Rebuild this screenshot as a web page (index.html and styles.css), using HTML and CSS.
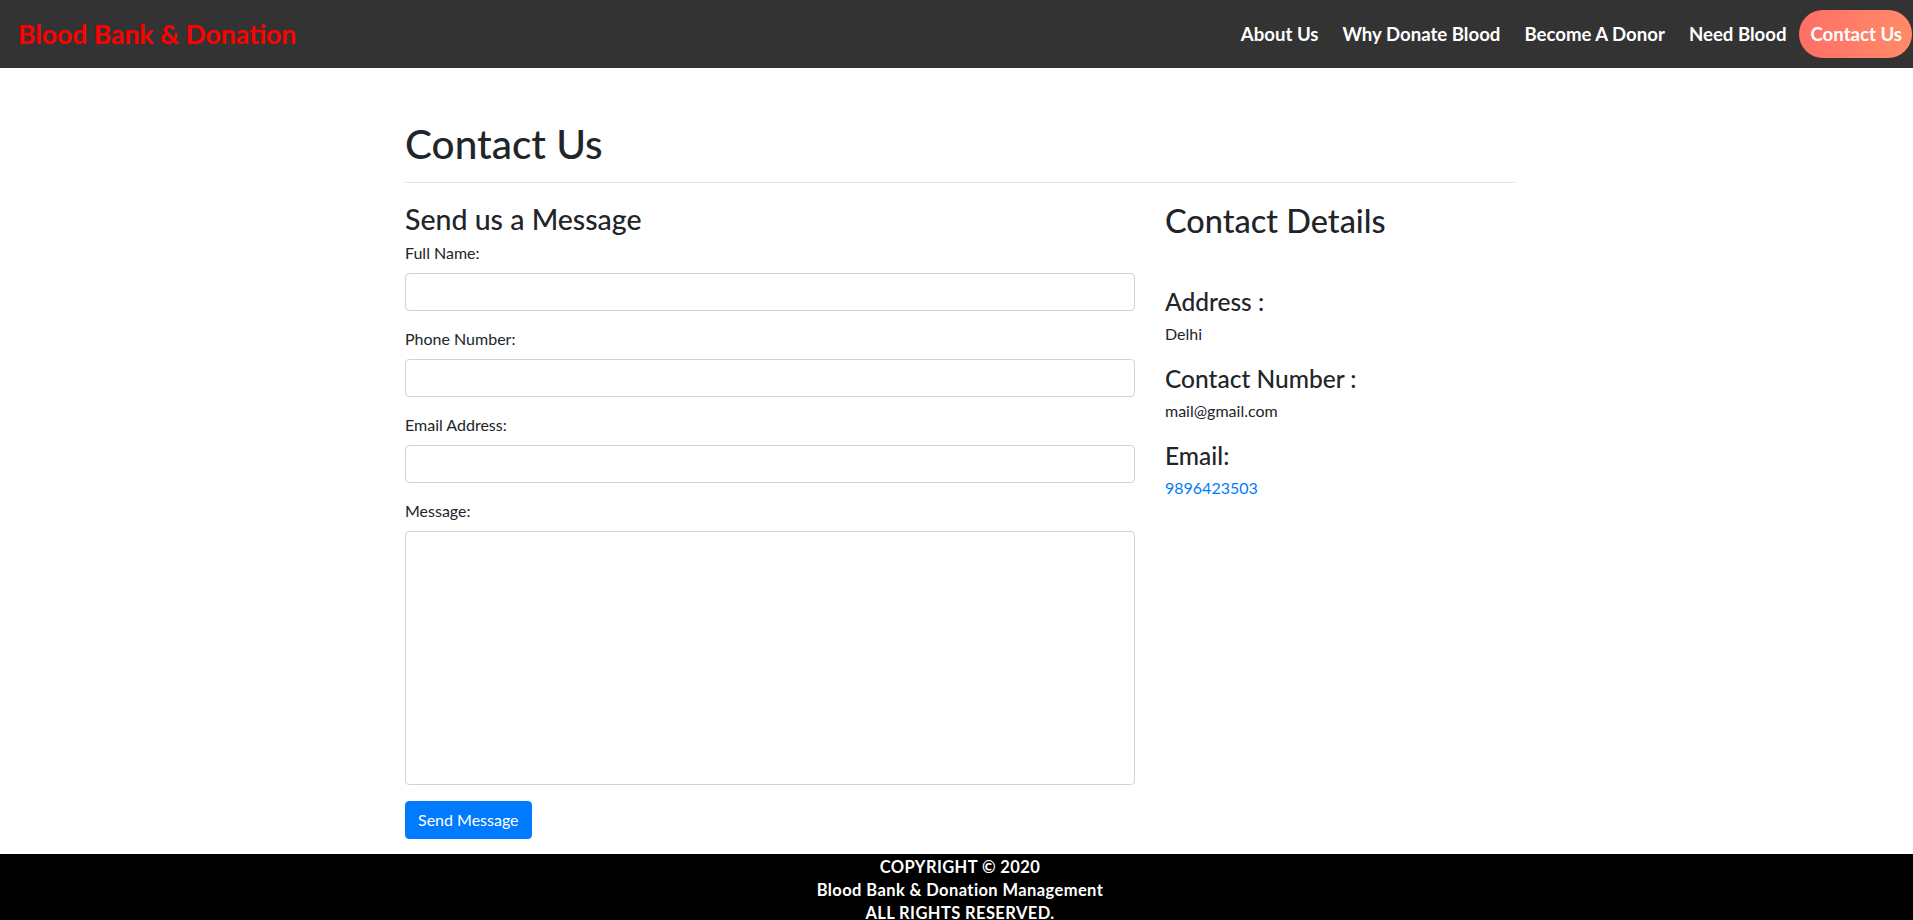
FILE: index.html
```html
<!DOCTYPE html>
<html lang="en">
<head>
<meta charset="utf-8">
<title>Contact Us - Blood Bank &amp; Donation</title>
<link rel="stylesheet" href="styles.css">
</head>
<body>
<header class="navbar">
  <a class="brand" href="#">Blood Bank &amp; Donation</a>
  <nav class="nav">
    <a class="nav-link" href="#">About Us</a>
    <a class="nav-link" href="#">Why Donate Blood</a>
    <a class="nav-link" href="#">Become A Donor</a>
    <a class="nav-link" href="#">Need Blood</a>
    <a class="nav-link active" href="#">Contact Us</a>
  </nav>
</header>

<main class="container">
  <h1 class="page-title">Contact Us</h1>
  <hr class="divider">
  <div class="row">
    <section class="col-form">
      <h3 class="form-title">Send us a Message</h3>
      <form class="contact-form">
        <div class="form-group">
          <label class="form-label">Full Name:</label>
          <input class="form-control" type="text">
        </div>
        <div class="form-group">
          <label class="form-label">Phone Number:</label>
          <input class="form-control" type="tel">
        </div>
        <div class="form-group">
          <label class="form-label">Email Address:</label>
          <input class="form-control" type="email">
        </div>
        <div class="form-group">
          <label class="form-label">Message:</label>
          <textarea class="form-control textarea" rows="10"></textarea>
        </div>
        <button class="btn-primary" type="button">Send Message</button>
      </form>
    </section>
    <aside class="col-details">
      <h2 class="details-title">Contact Details</h2>
      <div class="details">
        <h4 class="detail-head">Address :</h4>
        <p class="detail-text">Delhi</p>
        <h4 class="detail-head">Contact Number :</h4>
        <p class="detail-text">mail@gmail.com</p>
        <h4 class="detail-head">Email:</h4>
        <p class="detail-text"><a class="detail-link" href="#">9896423503</a></p>
      </div>
    </aside>
  </div>
</main>

<footer class="footer">
  <p class="footer-line">COPYRIGHT © 2020</p>
  <p class="footer-line">Blood Bank &amp; Donation Management</p>
  <p class="footer-line">ALL RIGHTS RESERVED.</p>
</footer>
</body>
</html>
```

FILE: styles.css
```css
* { box-sizing: border-box; }

html, body {
  margin: 0;
  padding: 0;
}

body {
  font-family: Lato, "Open Sans", "Noto Sans", sans-serif;
  font-size: 16px;
  line-height: 1.5;
  color: #212529;
  background: #fff;
}

/* Navbar */
.navbar {
  height: 68px;
  background: #333333;
  display: flex;
  align-items: center;
  justify-content: space-between;
  padding: 0 1px 0 18px;
}

.brand {
  color: #ff0000;
  font-weight: 700;
  font-size: 26.5px;
  text-decoration: none;
  line-height: 1;
}

.nav {
  display: flex;
  align-items: center;
}

.nav-link {
  color: #fff;
  font-weight: 700;
  font-size: 18.6px;
  line-height: 48px;
  padding: 0 12px;
  text-decoration: none;
  border-radius: 24px;
}

.nav-link.active {
  background: linear-gradient(to right, #ff6f66, #ff8b69);
  padding: 0 10px 0 12px;
}

/* Main container */
.container {
  width: 1110px;
  margin-left: calc(50% - 551.5px);
  padding-top: 50px;
  padding-bottom: 15px;
}

.page-title {
  font-size: 40.5px;
  font-weight: 500;
  line-height: 48px;
  margin: 0;
  padding-top: 2px;
}

.divider {
  border: 0;
  border-top: 1px solid rgba(0, 0, 0, 0.1);
  margin: 14px 0 16px;
}

.row {
  display: grid;
  grid-template-columns: 730px 1fr;
  column-gap: 30px;
}

.form-title {
  font-size: 28.5px;
  font-weight: 500;
  line-height: 1.2;
  margin: 0 0 5px;
  padding-top: 3px;
}

.form-group {
  margin-bottom: 16px;
}

.form-label {
  display: block;
  margin-bottom: 8px;
  line-height: 24px;
}

.form-control {
  display: block;
  width: 100%;
  height: 38px;
  padding: 6px 12px;
  font: inherit;
  color: #495057;
  background: #fff;
  border: 1px solid #ced4da;
  border-radius: 4px;
}

.textarea {
  height: 254px;
  resize: none;
}

.btn-primary {
  display: inline-block;
  height: 38px;
  padding: 6px 12px;
  font: inherit;
  line-height: 24px;
  color: #fff;
  background: #007bff;
  border: 1px solid #007bff;
  border-radius: 4px;
  cursor: pointer;
}

/* Details */
.details-title {
  font-size: 32.5px;
  font-weight: 500;
  line-height: 1.2;
  margin: 0 0 45px;
  padding-top: 2px;
}

.detail-head {
  font-size: 24.5px;
  font-weight: 500;
  line-height: 28px;
  margin: 0 0 6px;
  padding-top: 3px;
}

.detail-text {
  margin: 0 0 16px;
}

.detail-link {
  color: #007bff;
  text-decoration: none;
}

/* Footer */
.footer {
  background: #000;
  color: #fff;
  text-align: center;
  font-weight: 700;
  font-size: 16.5px;
  letter-spacing: 0.4px;
  padding: 2px 0 0 7px;
}

.footer-line {
  margin: 0;
  line-height: 23px;
}
```
